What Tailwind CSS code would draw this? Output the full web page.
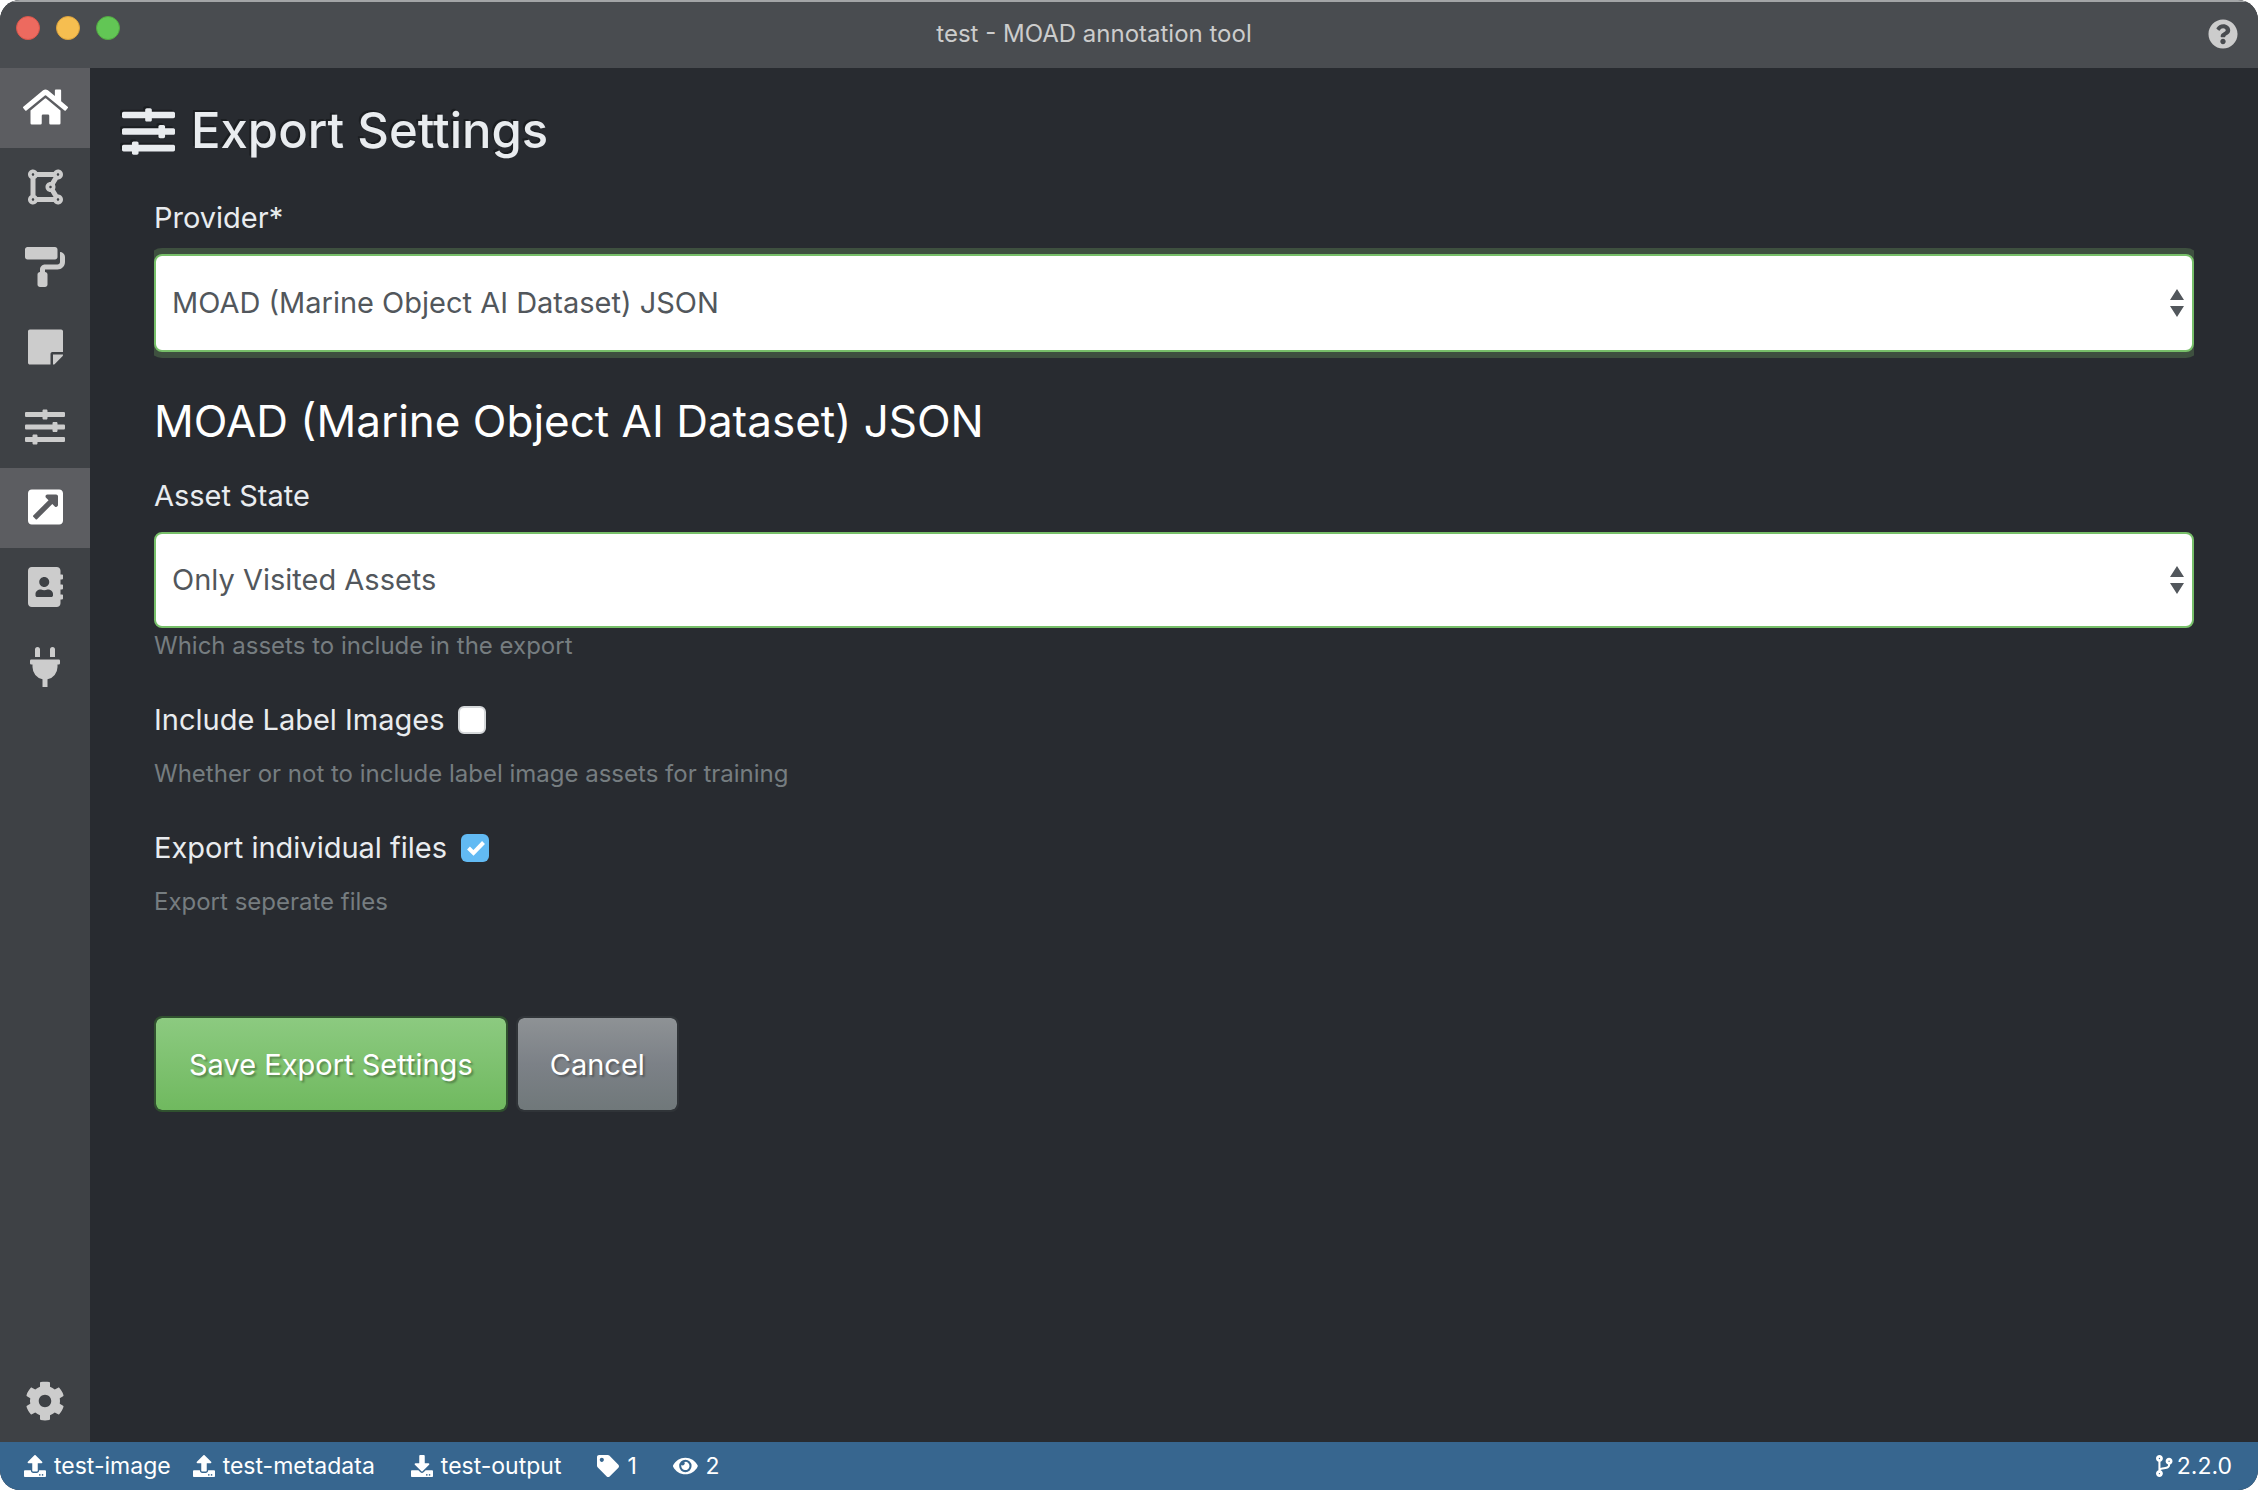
<!DOCTYPE html>
<html lang="en" class="h-full bg-white">
<head>
<meta charset="utf-8">
<meta name="viewport" content="width=device-width, initial-scale=1">
<title>test - MOAD annotation tool</title>
<script src="https://cdn.jsdelivr.net/npm/@tailwindcss/browser@4"></script>
</head>
<body class="h-full bg-white font-['Inter',sans-serif] text-[29px] text-[#e9ecef]">
<div class="flex h-full min-h-screen flex-col overflow-hidden rounded-[20px] bg-[#282b30]">
  <header class="relative flex h-[68px] shrink-0 items-center justify-center border-t-2 border-[#a3a5a7] bg-[#494c50] text-2xl text-[#cccccc]">
    <div class="absolute top-[14px] left-4 flex gap-4">
      <button type="button" aria-label="Close" class="size-6 rounded-full border border-[#d9564b] bg-[#ed6a5f]"></button>
      <button type="button" aria-label="Minimize" class="size-6 rounded-full border border-[#dba23c] bg-[#f6be50]"></button>
      <button type="button" aria-label="Zoom" class="size-6 rounded-full border border-[#52a842] bg-[#62c655]"></button>
    </div>
    <span class="pr-[70px] pb-0.5">test - MOAD annotation tool</span>
    <button type="button" aria-label="Help" class="absolute top-[17px] right-5">
      <svg class="size-[30px]" viewBox="0 0 512 512" fill="currentColor"><path d="M504 256c0 136.997-111.043 248-248 248S8 392.997 8 256C8 119.083 119.043 8 256 8s248 111.083 248 248zM262.655 90c-54.497 0-89.255 22.957-116.549 63.758-3.536 5.286-2.353 12.415 2.715 16.258l34.699 26.31c5.205 3.947 12.621 3.008 16.665-2.122 17.864-22.658 30.113-35.797 57.303-35.797 20.429 0 45.698 13.148 45.698 32.958 0 14.976-12.363 22.667-32.534 33.976C247.128 238.528 216 254.941 216 296v4c0 6.627 5.373 12 12 12h56c6.627 0 12-5.373 12-12v-1.333c0-28.462 83.186-29.647 83.186-106.667 0-58.002-60.165-102-116.531-102zM256 338c-25.365 0-46 20.635-46 46 0 25.364 20.635 46 46 46s46-20.636 46-46c0-25.364-20.635-46-46-46z"/></svg>
    </button>
  </header>

  <div class="flex min-h-0 flex-1">
    <nav class="flex w-[90px] shrink-0 flex-col bg-[#3e4145] text-[#cccccc]">
      <a href="#" aria-label="Home" class="flex h-20 items-center justify-center bg-[#5c5d61] pb-0.5 text-white"><svg class="h-10" viewBox="0 0 576 512" fill="currentColor"><path d="M280.37 148.26L96 300.11V464a16 16 0 0 0 16 16l112.06-.29a16 16 0 0 0 15.92-16V368a16 16 0 0 1 16-16h64a16 16 0 0 1 16 16v95.64a16 16 0 0 0 16 16.05L464 480a16 16 0 0 0 16-16V300L295.67 148.26a12.19 12.19 0 0 0-15.3 0zM571.6 251.47L488 182.56V44.05a12 12 0 0 0-12-12h-56a12 12 0 0 0-12 12v72.61L318.47 43a48 48 0 0 0-61 0L4.34 251.47a12 12 0 0 0-1.6 16.9l25.5 31A12 12 0 0 0 45.15 301l235.22-193.74a12.19 12.19 0 0 1 15.3 0L530.9 301a12 12 0 0 0 16.9-1.6l25.5-31a12 12 0 0 0-1.7-16.93z"/></svg></a>
      <a href="#" aria-label="Annotate" class="flex h-20 items-center justify-center pb-0.5"><svg class="h-10" viewBox="0 0 448 512" fill="currentColor"><path d="M384 352c-.35 0-.67.1-1.02.1l-39.2-65.32c5.07-9.17 8.22-19.56 8.22-30.78s-3.14-21.61-8.22-30.78l39.2-65.32c.35.01.67.1 1.02.1 35.35 0 64-28.65 64-64s-28.65-64-64-64c-23.63 0-44.04 12.95-55.12 32H119.12C108.04 44.95 87.63 32 64 32 28.65 32 0 60.65 0 96c0 23.63 12.95 44.04 32 55.12v209.75C12.95 371.96 0 392.37 0 416c0 35.35 28.65 64 64 64 23.63 0 44.04-12.95 55.12-32h209.75c11.09 19.05 31.49 32 55.12 32 35.35 0 64-28.65 64-64 .01-35.35-28.64-64-63.99-64zm-288 8.88V151.12A63.825 63.825 0 0 0 119.12 128h208.36l-38.46 64.1c-.35-.01-.67-.1-1.02-.1-35.35 0-64 28.65-64 64s28.65 64 64 64c.35 0 .67-.1 1.02-.1l38.46 64.1H119.12A63.748 63.748 0 0 0 96 360.88zM272 256c0-8.82 7.18-16 16-16s16 7.18 16 16-7.18 16-16 16-16-7.18-16-16zM400 96c0 8.82-7.18 16-16 16s-16-7.18-16-16 7.18-16 16-16 16 7.18 16 16zM64 80c8.82 0 16 7.18 16 16s-7.18 16-16 16-16-7.18-16-16 7.18-16 16-16zM48 416c0-8.82 7.18-16 16-16s16 7.18 16 16-7.18 16-16 16-16-7.18-16-16zm336 16c-8.82 0-16-7.18-16-16s7.18-16 16-16 16 7.18 16 16-7.18 16-16 16z"/></svg></a>
      <a href="#" aria-label="Segment" class="flex h-20 items-center justify-center pb-0.5"><svg class="h-10" viewBox="0 0 512 512" fill="currentColor"><path d="M416 128V32c0-17.67-14.33-32-32-32H32C14.33 0 0 14.33 0 32v96c0 17.67 14.33 32 32 32h352c17.67 0 32-14.33 32-32zm32-64v128c0 17.67-14.33 32-32 32H256c-35.35 0-64 28.65-64 64v32c-17.67 0-32 14.33-32 32v128c0 17.67 14.33 32 32 32h64c17.67 0 32-14.33 32-32V352c0-17.67-14.33-32-32-32v-32h160c53.02 0 96-42.98 96-96v-64c0-35.35-28.65-64-64-64z"/></svg></a>
      <a href="#" aria-label="Metadata" class="flex h-20 items-center justify-center pb-0.5"><svg class="h-10" viewBox="0 0 448 512" fill="currentColor"><path d="M312 320h136V56c0-13.3-10.7-24-24-24H24C10.7 32 0 42.7 0 56v400c0 13.3 10.7 24 24 24h264V344c0-13.2 10.8-24 24-24zm129 55l-98 98c-4.5 4.5-10.6 7-17 7h-6V352h128v6.1c0 6.3-2.5 12.4-7 16.9z"/></svg></a>
      <a href="#" aria-label="Project settings" class="flex h-20 items-center justify-center pb-0.5"><svg class="h-10" viewBox="0 0 512 512" fill="currentColor"><path d="M496 384H160v-16c0-8.8-7.2-16-16-16h-32c-8.8 0-16 7.2-16 16v16H16c-8.8 0-16 7.2-16 16v32c0 8.8 7.2 16 16 16h80v16c0 8.8 7.2 16 16 16h32c8.8 0 16-7.2 16-16v-16h336c8.8 0 16-7.2 16-16v-32c0-8.8-7.2-16-16-16zm0-160h-80v-16c0-8.8-7.2-16-16-16h-32c-8.8 0-16 7.2-16 16v16H16c-8.8 0-16 7.2-16 16v32c0 8.8 7.2 16 16 16h336v16c0 8.8 7.2 16 16 16h32c8.8 0 16-7.2 16-16v-16h80c8.8 0 16-7.2 16-16v-32c0-8.8-7.2-16-16-16zm0-160H288V48c0-8.8-7.2-16-16-16h-32c-8.8 0-16 7.2-16 16v16H16C7.2 64 0 71.2 0 80v32c0 8.8 7.2 16 16 16h208v16c0 8.8 7.2 16 16 16h32c8.8 0 16-7.2 16-16v-16h208c8.8 0 16-7.2 16-16V80c0-8.8-7.2-16-16-16z"/></svg></a>
      <a href="#" aria-label="Export" aria-current="page" class="flex h-20 items-center justify-center bg-[#5c5d61] pb-0.5 text-white"><svg class="h-10" viewBox="0 0 448 512" fill="currentColor"><path d="M448 80v352c0 26.51-21.49 48-48 48H48c-26.51 0-48-21.49-48-48V80c0-26.51 21.49-48 48-48h352c26.51 0 48 21.49 48 48zm-88 16H248.029c-21.313 0-32.08 25.861-16.971 40.971l31.984 31.987L67.515 364.485c-4.686 4.686-4.686 12.284 0 16.971l31.029 31.029c4.687 4.686 12.285 4.686 16.971 0l195.526-195.526 31.988 31.991C358.058 263.977 384 253.425 384 231.979V120c0-13.255-10.745-24-24-24z"/></svg></a>
      <a href="#" aria-label="Connections" class="flex h-20 items-center justify-center pb-0.5"><svg class="h-10" viewBox="0 0 448 512" fill="currentColor"><path d="M436 160c6.6 0 12-5.4 12-12v-40c0-6.600-5.400-12-12-12h-20V48c0-26.500-21.500-48-48-48H48C21.500 0 0 21.500 0 48v416c0 26.500 21.500 48 48 48h320c26.500 0 48-21.500 48-48v-48h20c6.600 0 12-5.400 12-12v-40c0-6.600-5.400-12-12-12h-20v-64h20c6.600 0 12-5.400 12-12v-40c0-6.600-5.400-12-12-12h-20v-64h20zm-228-32c35.300 0 64 28.700 64 64s-28.700 64-64 64-64-28.700-64-64 28.700-64 64-64zm112 236.800c0 10.600-10 19.200-22.400 19.200H118.400C106 384 96 375.400 96 364.800v-19.200c0-31.800 30.100-57.600 67.200-57.600h5c12.300 5.100 25.700 8 39.800 8s27.600-2.900 39.800-8h5c37.100 0 67.200 25.800 67.200 57.600v19.200z"/></svg></a>
      <a href="#" aria-label="Active learning" class="flex h-20 items-center justify-center pb-0.5"><svg class="h-10" viewBox="0 0 384 512" fill="currentColor"><path d="M320 32a32 32 0 0 0-64 0v96h64zm48 128H16a16 16 0 0 0-16 16v32a16 16 0 0 0 16 16h16v32a160.07 160.07 0 0 0 128 156.8V512h64v-99.2A160.07 160.07 0 0 0 352 256v-32h16a16 16 0 0 0 16-16v-32a16 16 0 0 0-16-16zM128 32a32 32 0 0 0-64 0v96h64z"/></svg></a>
      <a href="#" aria-label="Application settings" class="mt-auto flex h-20 items-center justify-center pb-0.5"><svg class="h-10" viewBox="0 0 512 512" fill="currentColor"><path d="M487.4 315.7l-42.6-24.6c4.3-23.2 4.3-47 0-70.2l42.6-24.6c4.9-2.8 7.1-8.6 5.5-14-11.1-35.6-30-67.8-54.7-94.6-3.8-4.1-10-5.1-14.8-2.3L380.8 110c-17.9-15.4-38.5-27.3-60.8-35.100V25.800c0-5.600-3.900-10.500-9.400-11.700-36.700-8.200-74.300-7.800-109.200 0-5.500 1.200-9.400 6.100-9.400 11.700V75c-22.200 7.900-42.800 19.800-60.800 35.100L88.700 85.500c-4.900-2.800-11-1.900-14.800 2.300-24.700 26.700-43.600 58.900-54.700 94.600-1.700 5.400.6 11.200 5.500 14L67.300 221c-4.300 23.200-4.300 47 0 70.200l-42.600 24.600c-4.900 2.800-7.100 8.600-5.500 14 11.100 35.600 30 67.800 54.700 94.600 3.800 4.100 10 5.100 14.800 2.300l42.600-24.600c17.900 15.400 38.500 27.300 60.800 35.100v49.200c0 5.600 3.900 10.500 9.400 11.700 36.700 8.200 74.300 7.800 109.200 0 5.500-1.200 9.400-6.100 9.400-11.700v-49.200c22.200-7.900 42.800-19.800 60.800-35.100l42.600 24.600c4.900 2.800 11 1.900 14.800-2.300 24.700-26.700 43.600-58.900 54.700-94.600 1.500-5.500-.7-11.300-5.600-14.100zM256 336c-44.100 0-80-35.900-80-80s35.900-80 80-80 80 35.900 80 80-35.900 80-80 80z"/></svg></a>
    </nav>

    <main class="min-w-0 flex-1 overflow-auto px-8 pt-8">
      <h1 class="flex h-16 items-center gap-4 pb-0.5 text-[49px] font-medium [text-shadow:-2px_-2px_0_rgb(0_0_0/0.3)]">
        <svg class="size-[53px] drop-shadow-[-2px_-2px_0_rgb(0_0_0/0.3)]" viewBox="0 0 512 512" fill="currentColor" aria-hidden="true"><path d="M496 384H160v-16c0-8.8-7.2-16-16-16h-32c-8.8 0-16 7.2-16 16v16H16c-8.8 0-16 7.2-16 16v32c0 8.8 7.2 16 16 16h80v16c0 8.8 7.2 16 16 16h32c8.8 0 16-7.2 16-16v-16h336c8.8 0 16-7.2 16-16v-32c0-8.8-7.2-16-16-16zm0-160h-80v-16c0-8.8-7.2-16-16-16h-32c-8.8 0-16 7.2-16 16v16H16c-8.8 0-16 7.2-16 16v32c0 8.8 7.2 16 16 16h336v16c0 8.8 7.2 16 16 16h32c8.8 0 16-7.2 16-16v-16h80c8.8 0 16-7.2 16-16v-32c0-8.8-7.2-16-16-16zm0-160H288V48c0-8.8-7.2-16-16-16h-32c-8.8 0-16 7.2-16 16v16H16C7.2 64 0 71.2 0 80v32c0 8.8 7.2 16 16 16h208v16c0 8.8 7.2 16 16 16h32c8.8 0 16-7.2 16-16v-16h208c8.8 0 16-7.2 16-16V80c0-8.8-7.2-16-16-16z"/></svg>
        <span>Export Settings</span>
      </h1>

      <form class="px-8 pt-8">
        <label for="provider" class="block leading-[44px]">Provider*</label>
        <div class="relative mt-[14px] overflow-x-clip">
          <select id="provider" class="block h-[98px] w-full appearance-none rounded-lg border-2 border-[#77bf69] bg-white px-4 text-[#52575c] shadow-[0_0_0_6px_#3e503f] outline-none">
            <option>MOAD (Marine Object AI Dataset) JSON</option>
          </select>
          <svg class="pointer-events-none absolute inset-y-0 right-[10px] my-auto h-7 w-[14px]" viewBox="0 0 14 28" fill="#52575c" aria-hidden="true"><path d="M7 0l7 11H0zM0 17h14L7 28z"/></svg>
        </div>

        <h2 class="mt-10 text-[44px] leading-[58px] text-white">MOAD (Marine Object AI Dataset) JSON</h2>

        <label for="asset-state" class="mt-6 block leading-[44px]">Asset State</label>
        <div class="relative mt-[14px]">
          <select id="asset-state" class="block h-24 w-full appearance-none rounded-lg border-2 border-[#77bf69] bg-white px-4 text-[#52575c] outline-none">
            <option>Only Visited Assets</option>
          </select>
          <svg class="pointer-events-none absolute inset-y-0 right-[10px] my-auto h-7 w-[14px]" viewBox="0 0 14 28" fill="#52575c" aria-hidden="true"><path d="M7 0l7 11H0zM0 17h14L7 28z"/></svg>
        </div>
        <p class="text-2xl leading-9 text-[#767d80]">Which assets to include in the export</p>

        <div class="mt-[34px] flex items-center gap-[14px] leading-[44px]">
          <label for="label-images">Include Label Images</label>
          <input id="label-images" type="checkbox" class="size-7 appearance-none rounded-md border-2 border-[#d5d8da] bg-white">
        </div>
        <p class="mt-[14px] text-2xl leading-9 text-[#767d80]">Whether or not to include label image assets for training</p>

        <div class="mt-[34px] flex items-center gap-[14px] leading-[44px]">
          <label for="individual-files">Export individual files</label>
          <span class="relative flex">
            <input id="individual-files" type="checkbox" checked class="size-7 appearance-none rounded-md bg-[#62baf3]">
            <svg class="pointer-events-none absolute inset-0 size-7" viewBox="0 0 28 28" fill="none" stroke="#fff" stroke-width="4" aria-hidden="true"><path d="M7.5 14l5 5L22.5 8.5"/></svg>
          </span>
        </div>
        <p class="mt-[14px] text-2xl leading-9 text-[#767d80]">Export seperate files</p>

        <div class="mt-24 flex gap-2 text-white">
          <button type="submit" class="h-24 rounded-lg border-2 border-[#30512f] bg-linear-to-b from-[#8cca80] to-[#70b95f] bg-clip-padding px-[33px] pt-0.5 [text-shadow:2px_2px_2px_rgb(0_0_0/0.3)]">Save Export Settings</button>
          <button type="button" class="h-24 rounded-lg border-2 border-[#303438] bg-linear-to-b from-[#8e9295] via-[#7c8187] to-[#70787a] bg-clip-padding px-8 pt-0.5 [text-shadow:2px_2px_2px_rgb(0_0_0/0.3)]">Cancel</button>
        </div>
      </form>
    </main>
  </div>

  <footer class="flex h-12 shrink-0 items-center bg-[#37668f] pr-[26px] pl-6 text-[23px] text-white">
    <span class="flex items-center gap-2"><svg class="size-[22px]" viewBox="0 0 512 512" fill="currentColor" aria-hidden="true"><path d="M296 384h-80c-13.3 0-24-10.7-24-24V192h-87.700c-17.800 0-26.700-21.500-14.100-34.100L242.300 5.700c7.500-7.500 19.800-7.500 27.300 0l152.200 152.200c12.600 12.600 3.700 34.100-14.100 34.100H320v168c0 13.300-10.700 24-24 24zm216-8v112c0 13.300-10.700 24-24 24H24c-13.300 0-24-10.700-24-24V376c0-13.300 10.700-24 24-24h136v8c0 30.900 25.100 56 56 56h80c30.900 0 56-25.100 56-56v-8h136c13.300 0 24 10.700 24 24zm-124 88c0-11-9-20-20-20s-20 9-20 20 9 20 20 20 20-9 20-20zm64 0c0-11-9-20-20-20s-20 9-20 20 9 20 20 20 20-9 20-20z"/></svg>test-image</span>
    <span class="ml-[22px] flex items-center gap-2"><svg class="size-[22px]" viewBox="0 0 512 512" fill="currentColor" aria-hidden="true"><path d="M296 384h-80c-13.3 0-24-10.7-24-24V192h-87.700c-17.800 0-26.700-21.500-14.100-34.100L242.300 5.700c7.500-7.500 19.800-7.500 27.300 0l152.200 152.200c12.600 12.600 3.700 34.100-14.100 34.100H320v168c0 13.300-10.700 24-24 24zm216-8v112c0 13.300-10.700 24-24 24H24c-13.300 0-24-10.700-24-24V376c0-13.300 10.700-24 24-24h136v8c0 30.900 25.100 56 56 56h80c30.900 0 56-25.100 56-56v-8h136c13.300 0 24 10.700 24 24zm-124 88c0-11-9-20-20-20s-20 9-20 20 9 20 20 20 20-9 20-20zm64 0c0-11-9-20-20-20s-20 9-20 20 9 20 20 20 20-9 20-20z"/></svg>test-metadata</span>
    <span class="ml-9 flex items-center gap-2"><svg class="size-[22px]" viewBox="0 0 512 512" fill="currentColor" aria-hidden="true"><path d="M216 0h80c13.3 0 24 10.7 24 24v168h87.700c17.800 0 26.700 21.500 14.100 34.100L269.700 378.300c-7.500 7.500-19.800 7.500-27.300 0L90.100 226.100c-12.600-12.600-3.700-34.100 14.100-34.100H192V24c0-13.300 10.700-24 24-24zm296 376v112c0 13.300-10.700 24-24 24H24c-13.300 0-24-10.700-24-24V376c0-13.300 10.700-24 24-24h146.700l49 49c20.100 20.100 52.500 20.100 72.600 0l49-49H488c13.300 0 24 10.700 24 24zm-124 88c0-11-9-20-20-20s-20 9-20 20 9 20 20 20 20-9 20-20zm64 0c0-11-9-20-20-20s-20 9-20 20 9 20 20 20 20-9 20-20z"/></svg>test-output</span>
    <span class="ml-9 flex items-center gap-2"><svg class="size-[22px]" viewBox="0 0 512 512" fill="currentColor" aria-hidden="true"><path d="M0 252.118V48C0 21.49 21.49 0 48 0h204.118a48 48 0 0 1 33.941 14.059l211.882 211.882c18.745 18.745 18.745 49.137 0 67.882L293.823 497.941c-18.745 18.745-49.137 18.745-67.882 0L14.059 286.059A48 48 0 0 1 0 252.118zM112 64c-26.51 0-48 21.49-48 48s21.49 48 48 48 48-21.49 48-48-21.49-48-48-48z"/></svg>1</span>
    <span class="ml-9 flex items-center gap-2"><svg class="h-[22px]" viewBox="0 0 576 512" fill="currentColor" aria-hidden="true"><path d="M572.52 241.4C518.29 135.59 410.93 64 288 64S57.68 135.64 3.48 241.41a32.35 32.35 0 0 0 0 29.19C57.71 376.41 165.07 448 288 448s230.32-71.64 284.52-177.41a32.35 32.35 0 0 0 0-29.19zM288 400a144 144 0 1 1 144-144 143.93 143.93 0 0 1-144 144zm0-240a95.31 95.31 0 0 0-25.31 3.79 47.85 47.85 0 0 1-66.9 66.9A95.78 95.78 0 1 0 288 160z"/></svg>2</span>
    <span class="ml-auto flex items-center gap-1"><svg class="h-[22px]" viewBox="0 0 384 512" fill="currentColor" aria-hidden="true"><path d="M384 144c0-44.2-35.8-80-80-80s-80 35.800-80 80c0 36.400 24.300 67.100 57.500 76.800-.6 16.100-4.200 28.500-11 36.900-15.400 19.200-49.300 22.400-85.200 25.700-28.200 2.600-57.400 5.400-81.300 16.900v-144c32.500-10.200 56-40.500 56-76.300 0-44.200-35.800-80-80-80S0 35.800 0 80c0 35.800 23.500 66.100 56 76.300v199.300C23.500 365.900 0 396.200 0 432c0 44.200 35.800 80 80 80s80-35.800 80-80c0-34-21.200-63.100-51.200-74.600 3.100-5.200 7.800-9.800 14.900-13.400 16.200-8.200 40.400-10.400 66.100-12.800 42.200-3.900 90-8.400 118.200-43.400 14-17.400 21.100-39.800 21.600-67.900 31.600-10.800 54.400-40.700 54.400-75.900zM80 64c8.800 0 16 7.200 16 16s-7.200 16-16 16-16-7.200-16-16 7.200-16 16-16zm0 384c-8.800 0-16-7.200-16-16s7.200-16 16-16 16 7.200 16 16-7.200 16-16 16zm224-320c8.800 0 16 7.200 16 16s-7.200 16-16 16-16-7.200-16-16 7.200-16 16-16z"/></svg>2.2.0</span>
  </footer>
</div>
</body>
</html>
